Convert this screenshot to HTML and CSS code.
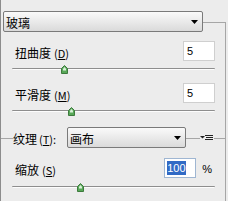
FILE: index.html
```html
<!DOCTYPE html>
<html>
<head>
<meta charset="utf-8">
<link rel="stylesheet" href="styles.css">
</head>
<body>
<div class="panel">
  <div class="head">
    <div class="select select-wide"><span class="sel-text">玻璃</span><svg class="arrow" width="7" height="4" viewBox="0 0 7 4"><polygon points="0,0 7,0 3.5,4" fill="#000"/></svg></div>
    <div class="head-line"></div>
  </div>
  <div class="body">
    <div class="param param-1">
      <span class="label">扭曲度<span class="key">(<u>D</u>)</span></span>
      <span class="num">5</span>
    </div>
    <div class="slider"><div class="track"></div><svg class="thumb" style="left:49px" width="7" height="9" viewBox="0 0 7 9"><polygon points="3.5,0.5 6.5,3.5 6.5,8.5 0.5,8.5 0.5,3.5" fill="#58a858" stroke="#3d7a3d"/><polygon points="3.5,2 5,3.7 5,5.5 2,5.5 2,3.7" fill="#d8f0d8"/></svg></div>
    <div class="param param-2">
      <span class="label">平滑度<span class="key">(<u>M</u>)</span></span>
      <span class="num">5</span>
    </div>
    <div class="slider"><div class="track"></div><svg class="thumb" style="left:56px" width="7" height="9" viewBox="0 0 7 9"><polygon points="3.5,0.5 6.5,3.5 6.5,8.5 0.5,8.5 0.5,3.5" fill="#58a858" stroke="#3d7a3d"/><polygon points="3.5,2 5,3.7 5,5.5 2,5.5 2,3.7" fill="#d8f0d8"/></svg></div>
    <div class="tex-row">
      <span class="seg seg-left"></span>
      <span class="tex-label">纹理<span class="key">(<u>T</u>):</span></span>
      <div class="select select-tex"><span class="sel-text">画布</span><svg class="arrow" width="7" height="4" viewBox="0 0 7 4"><polygon points="0,0 7,0 3.5,4" fill="#000"/></svg></div>
      <span class="seg seg-mid"></span>
      <svg class="menu-icon" width="14" height="6" viewBox="0 0 14 6"><polygon points="0,1 5,1 2.5,3.5" fill="#222"/><rect x="5" y="0" width="8" height="1" fill="#222"/><rect x="6" y="2" width="7" height="1" fill="#222"/><rect x="5" y="4" width="8" height="1" fill="#222"/></svg>
      <span class="seg seg-right"></span>
    </div>
    <div class="param param-3">
      <span class="label">缩放<span class="key">(<u>S</u>)</span></span>
      <span class="num-wrap"><span class="num num-focus"><span class="sel">100</span></span><span class="pct">%</span></span>
    </div>
    <div class="slider slider-3"><div class="track"></div><svg class="thumb" style="left:65px" width="7" height="9" viewBox="0 0 7 9"><polygon points="3.5,0.5 6.5,3.5 6.5,8.5 0.5,8.5 0.5,3.5" fill="#58a858" stroke="#3d7a3d"/><polygon points="3.5,2 5,3.7 5,5.5 2,5.5 2,3.7" fill="#d8f0d8"/></svg></div>
  </div>
</div>
</body>
</html>
```
FILE: styles.css
```css
html, body {
  margin: 0;
  padding: 0;
}
body {
  background: #ececec;
  width: 228px;
  height: 201px;
  overflow: hidden;
  font-family: "Noto Sans CJK SC", "Noto Sans", sans-serif;
  font-size: 12px;
  color: #000;
}
.panel {
  width: 225px;
  height: 201px;
  border-left: 1px solid #8c8c8c;
  display: flex;
  flex-direction: column;
}
.head {
  display: flex;
  align-items: flex-start;
  padding: 11px 0 0 2px;
  height: 32px;
  box-sizing: border-box;
}
.select {
  box-sizing: border-box;
  height: 21px;
  border: 1px solid #7a7a7a;
  border-radius: 2px;
  background: linear-gradient(#fafafa, #dadada);
  display: flex;
  align-items: center;
  justify-content: space-between;
  padding: 0 4px 0 2px;
}
.select-wide {
  width: 200px;
}
.sel-text {
  line-height: 19px;
  padding-top: 1px;
}
.arrow {
  display: block;
  margin-top: 1px;
}
.head-line {
  flex: 1;
  margin-top: 11px;
  height: 10px;
  border-top: 1px solid #a6a6a6;
  border-right: 1px solid #a6a6a6;
}
.body {
  flex: 1;
  border-right: 1px solid #a6a6a6;
  padding: 0 10px 0 14px;
  display: flex;
  flex-direction: column;
}
.param {
  display: flex;
  justify-content: space-between;
  align-items: center;
  height: 20px;
}
.param-1 { margin-top: 9px; }
.param-2 { margin-top: 8px; }
.param-3 { margin-top: 10px; }
.label {
  padding-top: 3px;
  line-height: 14px;
}
.key {
  font-size: 11px;
  margin-left: 3px;
}
.num {
  box-sizing: border-box;
  width: 32px;
  height: 20px;
  border: 1px solid #cfcfcf;
  background: #fff;
  font-family: "Liberation Sans", Arial, sans-serif;
  font-size: 11px;
  line-height: 18px;
  padding-left: 3px;
}
.num-wrap {
  display: flex;
  align-items: center;
  margin-right: 3px;
}
.num-focus {
  border-color: #9fb6d2;
  padding-left: 2px;
}
.sel {
  background: #316ac5;
  color: #fff;
  padding: 1px 0;
}
.pct {
  font-family: "Liberation Sans", Arial, sans-serif;
  font-size: 11px;
  margin-left: 6px;
  padding-top: 2px;
}
.slider {
  position: relative;
  height: 12px;
  margin: 2px 0 0 -3px;
  width: 203px;
  padding-top: 5px;
  box-sizing: border-box;
}
.slider-3 {
  margin-top: 3px;
}
.track {
  height: 1px;
  background: #8e8e8e;
  border-bottom: 1px solid #fdfdfd;
  border-radius: 1px;
}
.thumb {
  position: absolute;
  top: 2px;
  display: block;
}
.tex-row {
  display: flex;
  align-items: flex-start;
  height: 21px;
  margin: 10px -10px 0 -14px;
}
.seg {
  height: 1px;
  background: #a6a6a6;
  margin-top: 11px;
}
.seg-left { width: 12px; }
.seg-mid { flex: 1; }
.seg-right { width: 11px; }
.tex-label {
  width: 54px;
  line-height: 14px;
  padding-top: 5px;
}
.tex-label .key {
  margin-left: 2px;
}
.select-tex {
  width: 119px;
}
.menu-icon {
  display: block;
  margin-top: 8px;
}
```
